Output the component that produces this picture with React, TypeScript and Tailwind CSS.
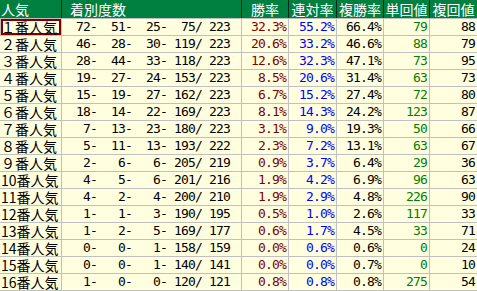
import React from "react";

type Row = [string, number, number, number, number, number, string, string, string, string, string];

const rows: Row[] = [
  ["１番人気", 72, 51, 25, 75, 223, "32.3%", "55.2%", "66.4%", "79", "88"],
  ["２番人気", 46, 28, 30, 119, 223, "20.6%", "33.2%", "46.6%", "88", "79"],
  ["３番人気", 28, 44, 33, 118, 223, "12.6%", "32.3%", "47.1%", "73", "95"],
  ["４番人気", 19, 27, 24, 153, 223, "8.5%", "20.6%", "31.4%", "63", "73"],
  ["５番人気", 15, 19, 27, 162, 223, "6.7%", "15.2%", "27.4%", "72", "80"],
  ["６番人気", 18, 14, 22, 169, 223, "8.1%", "14.3%", "24.2%", "123", "87"],
  ["７番人気", 7, 13, 23, 180, 223, "3.1%", "9.0%", "19.3%", "50", "66"],
  ["８番人気", 5, 11, 13, 193, 222, "2.3%", "7.2%", "13.1%", "63", "67"],
  ["９番人気", 2, 6, 6, 205, 219, "0.9%", "3.7%", "6.4%", "29", "36"],
  ["10番人気", 4, 5, 6, 201, 216, "1.9%", "4.2%", "6.9%", "96", "63"],
  ["11番人気", 4, 2, 4, 200, 210, "1.9%", "2.9%", "4.8%", "226", "90"],
  ["12番人気", 1, 1, 3, 190, 195, "0.5%", "1.0%", "2.6%", "117", "33"],
  ["13番人気", 1, 2, 5, 169, 177, "0.6%", "1.7%", "4.5%", "33", "71"],
  ["14番人気", 0, 0, 1, 158, 159, "0.0%", "0.6%", "0.6%", "0", "24"],
  ["15番人気", 0, 0, 1, 140, 141, "0.0%", "0.0%", "0.7%", "0", "10"],
  ["16番人気", 1, 0, 0, 120, 121, "0.8%", "0.8%", "0.8%", "275", "54"],
];

const pad = (n: number, w: number) => String(n).padStart(w, " ");

function Mono({ text }: { text: string }) {
  return (
    <span className="inline-flex">
      {[...text].map((c, i) => (
        <span key={i} className="inline-block w-[7px] text-center">
          {c === " " ? "\u00a0" : c}
        </span>
      ))}
    </span>
  );
}

const jp = { fontFamily: '"Noto Sans CJK JP", "Noto Sans", sans-serif' };
const mono = { fontFamily: '"DejaVu Sans Mono", monospace' };

export default function App() {
  return (
    <div className="w-[477px] h-[291px] bg-[#c0c0c0] flex flex-col gap-px overflow-hidden">
      <div
        className="grid grid-cols-[61px_179px_46px_47px_46px_45px_47px] gap-px bg-[#002814] h-[18px] text-white text-[14px] leading-[18px]"
        style={jp}
      >
        <div className="bg-[#008040] pl-px">人気</div>
        <div className="bg-[#008040] pl-[8px]">着別度数</div>
        <div className="bg-[#008040] text-center">勝率</div>
        <div className="bg-[#008040] text-center">連対率</div>
        <div className="bg-[#008040] text-center">複勝率</div>
        <div className="bg-[#008040] text-center">単回値</div>
        <div className="bg-[#008040] text-center">複回値</div>
      </div>
      {rows.map((r, i) => {
        const rec =
          pad(r[1], 4) + "-" + pad(r[2], 4) + "-" + pad(r[3], 4) + "-" + pad(r[4], 4) + "/" + pad(r[5], 4);
        return (
          <div
            key={i}
            className="grid grid-cols-[61px_179px_46px_47px_46px_45px_47px] gap-px h-[16px] text-[13px] leading-[16px] text-black"
          >
            <div
              className={
                "bg-[#ffffe0] flex items-center text-[14px] leading-[16px] " +
                (i === 0 ? "shadow-[inset_0_0_0_2px_#800000] ml-px pl-0" : "pl-px")
              }
              style={jp}
            >
              {r[0]}
            </div>
            <div className="bg-[#ffffe0] flex items-center" style={mono}>
              <Mono text={rec} />
            </div>
            <div className="bg-[#ffffe0] flex items-center justify-end pr-[2px] text-[#800000]" style={mono}>
              <Mono text={r[6]} />
            </div>
            <div className="bg-[#ffffe0] flex items-center justify-end pr-[2px] text-[#0000ff]" style={mono}>
              <Mono text={r[7]} />
            </div>
            <div className="bg-[#ffffe0] flex items-center justify-end pr-[2px]" style={mono}>
              <Mono text={r[8]} />
            </div>
            <div className="bg-[#ffffe0] flex items-center justify-end pr-[2px] text-[#008000]" style={mono}>
              <Mono text={r[9]} />
            </div>
            <div className="bg-[#ffffe0] flex items-center justify-end pr-[2px]" style={mono}>
              <Mono text={r[10]} />
            </div>
          </div>
        );
      })}
    </div>
  );
}
